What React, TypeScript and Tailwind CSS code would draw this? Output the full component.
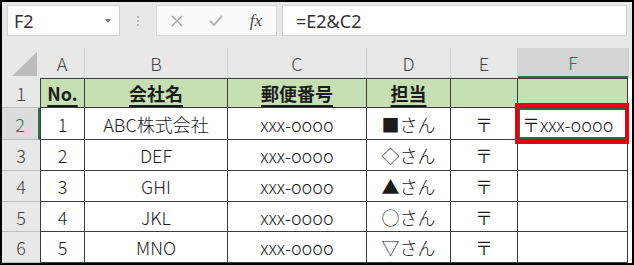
import React from "react";

const jp = "font-['Noto_Sans_CJK_JP','Noto_Sans',sans-serif]";

const rows = [
  { no: "1", name: "ABC株式会社", zip: "xxx-oooo", tan: "■さん", e: "〒", f: "〒xxx-oooo" },
  { no: "2", name: "DEF", zip: "xxx-oooo", tan: "◇さん", e: "〒", f: "" },
  { no: "3", name: "GHI", zip: "xxx-oooo", tan: "▲さん", e: "〒", f: "" },
  { no: "4", name: "JKL", zip: "xxx-oooo", tan: "○さん", e: "〒", f: "" },
  { no: "5", name: "MNO", zip: "xxx-oooo", tan: "▽さん", e: "〒", f: "" },
];

function FormulaBar() {
  return (
    <div className="flex items-center h-[46px] pl-[5px] pt-[3px] pb-[12px] shrink-0">
      {/* NAME BOX */}
      <div className="w-[113px] h-[31px] bg-white border border-[#d2d2d2] flex items-center justify-between pl-[6px] pr-[8px]">
        <span className="text-[18px] text-[#333] font-['Noto_Sans',sans-serif] leading-none">F2</span>
        <svg width="6" height="4" viewBox="0 0 6 4">
          <polygon points="0,0 6,0 3,4" fill="#7a7a7a" />
        </svg>
      </div>

      {/* DOTS */}
      <div className="w-[35px] h-[31px] flex flex-col items-center justify-center gap-[2px]">
        <span className="w-[2px] h-[2px] bg-[#b5b5b5]" />
        <span className="w-[2px] h-[2px] bg-[#b5b5b5]" />
        <span className="w-[2px] h-[2px] bg-[#b5b5b5]" />
      </div>

      {/* CANCEL / ENTER / FX */}
      <div className="ml-[1px] w-[121px] h-[31px] bg-[#fafafa] border border-[#d8d8d8] flex items-center justify-between pl-[14px] pr-[14px]">
        <svg width="12" height="12" viewBox="0 0 12 12">
          <path d="M1 1 L11 11 M11 1 L1 11" stroke="#a9a9a9" strokeWidth="1.4" />
        </svg>
        <svg width="14" height="11" viewBox="0 0 14 11">
          <path d="M1 6 L5 10 L13 1" stroke="#b3b3b3" strokeWidth="2" fill="none" />
        </svg>
        <span className="font-['Liberation_Serif',serif] italic text-[17px] text-[#4a4a4a] leading-none">
          fx
        </span>
      </div>

      {/* FORMULA */}
      <div className="ml-[5px] w-[345px] h-[31px] bg-white border border-[#d2d2d2] flex items-center pl-[13px]">
        <span className="text-[18px] text-[#333] font-['Noto_Sans',sans-serif] leading-none">=E2&amp;C2</span>
      </div>
    </div>
  );
}

function ColHeader({ label, active = false }: { label: string; active?: boolean }) {
  return (
    <div
      className={
        active
          ? "bg-[#d4d4d4] text-[#217346] border-b-2 border-[#217346] flex items-center justify-center text-[18px] font-light"
          : "border-r border-[#d0d0d0] text-[#444] flex items-center justify-center text-[18px] font-light"
      }
    >
      {label}
    </div>
  );
}

function RowHeader({ label, active = false }: { label: string; active?: boolean }) {
  return (
    <div
      className={
        active
          ? "bg-[#dcdcdc] text-[#217346] border-b border-[#bdbdbd] border-r-2 border-r-[#217346] flex items-center justify-center text-[18px] font-light"
          : "text-[#444] border-b border-[#bdbdbd] flex items-center justify-center text-[18px] font-light"
      }
    >
      {label}
    </div>
  );
}

function Cell({
  children,
  green = false,
  first = false,
  top = false,
  left = false,
}: {
  children?: React.ReactNode;
  green?: boolean;
  first?: boolean;
  top?: boolean;
  left?: boolean;
}) {
  return (
    <div
      className={[
        "border-r border-b border-[#3c3c3c] flex items-center text-[18px] font-light text-[#1c1c1c] whitespace-nowrap",
        green ? "bg-[#c6e0b4]" : "bg-white",
        first ? "border-l" : "",
        top ? "border-t" : "",
        left ? "justify-start pl-[4px]" : "justify-center",
      ].join(" ")}
    >
      {children}
    </div>
  );
}

function Head({ children }: { children: React.ReactNode }) {
  return (
    <span className="font-bold underline underline-offset-[4px] decoration-[1.5px]">{children}</span>
  );
}

export default function App() {
  return (
    <div className={`w-[634px] h-[265px] border-2 border-black bg-[#e8e8e8] flex flex-col overflow-hidden ${jp}`}>
      <FormulaBar />

      <div className="grid grid-cols-[38px_45px_143px_139px_84px_67px_110px_1fr] grid-rows-[30px_30px_32px_31px_31px_30px_31px] leading-none">
        {/* COLUMN HEADERS */}
        <div className="flex items-end justify-end pr-[3px] pb-[2px]">
          <svg width="25" height="24" viewBox="0 0 25 24">
            <polygon points="25,0 25,24 0,24" fill="#bcbcbc" />
          </svg>
        </div>
        <ColHeader label="A" />
        <ColHeader label="B" />
        <ColHeader label="C" />
        <ColHeader label="D" />
        <ColHeader label="E" />
        <ColHeader label="F" active />
        <div className="border-l border-[#d0d0d0]" />

        {/* ROW 1 */}
        <RowHeader label="1" />
        <Cell green first top>
          <Head>No.</Head>
        </Cell>
        <Cell green top>
          <Head>会社名</Head>
        </Cell>
        <Cell green top>
          <Head>郵便番号</Head>
        </Cell>
        <Cell green top>
          <Head>担当</Head>
        </Cell>
        <Cell green top />
        <Cell green top />
        <div className="bg-white" />

        {/* DATA ROWS */}
        {rows.map((r, i) => (
          <React.Fragment key={r.no}>
            <RowHeader label={String(i + 2)} active={i === 0} />
            <Cell first>{r.no}</Cell>
            <Cell>{r.name}</Cell>
            <Cell>{r.zip}</Cell>
            <Cell>{r.tan}</Cell>
            <Cell>{r.e}</Cell>
            {i === 0 ? (
              <div className="relative z-10 bg-white border-r border-b border-[#3c3c3c] flex items-center pl-[4px] text-[18px] font-light text-[#1c1c1c] whitespace-nowrap">
                {r.f}
                {/* selection + red annotation */}
                <div className="absolute inset-0 border-2 border-[#217346]" />
                <div className="absolute -left-[3px] -right-[2px] -top-[5px] -bottom-[5px] border-4 border-[#e50012]" />
              </div>
            ) : (
              <Cell left>{r.f}</Cell>
            )}
            <div className="bg-white" />
          </React.Fragment>
        ))}
      </div>
    </div>
  );
}
